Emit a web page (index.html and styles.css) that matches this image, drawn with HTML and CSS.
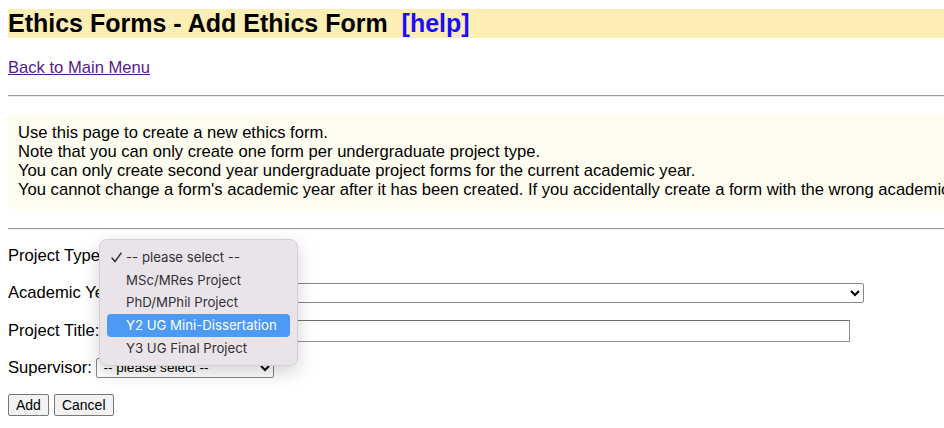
FILE: index.html
```html
<!DOCTYPE html>
<html>
<head>
<meta charset="utf-8">
<title>Ethics Forms - Add Ethics Form</title>
<link rel="stylesheet" href="styles.css">
</head>
<body>
<div class="page">
<h1 class="title">Ethics Forms - Add Ethics Form&nbsp;&nbsp;<a class="help" href="#">[help]</a></h1>
<p class="back"><a href="#">Back to Main Menu</a></p>
<hr class="rule">
<div class="info">
Use this page to create a new ethics form.<br>
Note that you can only create one form per undergraduate project type.<br>
You can only create second year undergraduate project forms for the current academic year.<br>
You cannot change a form's academic year after it has been created. If you accidentally create a form with the wrong academic year, please delete it and create a new one.
</div>
<hr class="rule rule2">
<form class="form">
  <div class="row"><span class="label">Project Type:</span><span class="anchor"><select class="sel sel-type"><option>-- please select --</option></select><span class="menu"><span class="item"><svg class="check" width="11" height="11" viewBox="0 0 11 11"><polyline points="1,6 4,9.6 10,1.2" fill="none" stroke="#333035" stroke-width="1.5" stroke-linecap="round" stroke-linejoin="round"/></svg>-- please select --</span><span class="item">MSc/MRes Project</span><span class="item">PhD/MPhil Project</span><span class="item active">Y2 UG Mini-Dissertation</span><span class="item">Y3 UG Final Project</span></span></span></div>
  <div class="row"><span class="label">Academic Year:</span><select class="sel sel-year"><option></option></select></div>
  <div class="row"><span class="label">Project Title:</span><input class="txt" type="text"></div>
  <div class="row"><span class="label">Supervisor:</span><select class="sel sel-sup"><option>-- please select --</option></select></div>
  <div class="row buttons"><button type="button" class="btn">Add</button><button type="button" class="btn">Cancel</button></div>
</form>
</div>
</body>
</html>
```
FILE: styles.css
```css
html {
  overflow: hidden;
}
body {
  margin: 8px 0 8px 8px;
  font-family: "Liberation Sans", Arial, sans-serif;
  font-size: 16.6px;
  color: #000;
  background: #fff;
}
.page {
  overflow: hidden;
  padding-bottom: 20px;
}
.title {
  margin: 1px 0 0;
  padding: 0;
  background: #fdeeb5;
  font-size: 25px;
  line-height: 29px;
  font-weight: bold;
  white-space: nowrap;
}
.help {
  color: #1a0dff;
  text-decoration: none;
}
.back {
  margin: 21px 0 0;
  line-height: 18px;
}
.back a {
  color: #551a8b;
}
.rule {
  margin: 18px 0 0;
  border: 0;
  border-top: 1px solid #9a9a9a;
  border-bottom: 1px solid #eee;
}
.info {
  margin-top: 17px;
  background: #fffdf0;
  padding: 9px 10px 10px;
  white-space: nowrap;
  line-height: 19px;
}
.rule2 {
  margin-top: 19px;
}
.form {
  margin: 0;
}
.row {
  margin: 14.8px 0 0;
  height: 22.5px;
  display: flex;
  align-items: center;
}
.label {
  margin-right: 2.5px;
}
.anchor {
  position: relative;
  display: block;
}
.sel {
  font-family: "Liberation Sans", Arial, sans-serif;
  font-size: 13.6px;
  height: 20px;
  border: 1px solid #888;
  border-radius: 2px;
  background: #fff;
  margin: 0 0 0 2px;
  padding: 0 2px;
  display: block;
}
.sel-type { width: 178px; }
.sel-year { width: 736px; }
.sel-sup { width: 178px; }
.txt {
  width: 746px;
  border: 1px solid #8f8f8f;
  border-top-color: #6f6f6f;
  padding: 0 2px;
  margin-left: 2px;
  box-sizing: border-box;
  height: 22px;
}
.btn {
  font-family: "Liberation Sans", Arial, sans-serif;
  font-size: 14px;
  height: 22px;
  padding: 0 7px;
  border: 1px solid #777;
  border-radius: 2px;
  background: #f2f2f2;
  color: #000;
  margin: 0;
}
.btn + .btn { margin-left: 5px; }
.menu {
  position: absolute;
  left: -8px;
  top: -7px;
  width: 199px;
  padding: 6px 7px;
  box-sizing: border-box;
  background: #e9e4ea;
  border: 1px solid #d4cfd6;
  border-radius: 8px;
  box-shadow: 0 6px 18px rgba(0,0,0,0.18);
  font-family: Inter, "Noto Sans", sans-serif;
  font-size: 13.2px;
  color: #333035;
  z-index: 5;
  white-space: nowrap;
  display: flex;
  flex-direction: column;
}
.item {
  display: block;
  height: 22.7px;
  line-height: 22.7px;
  padding-left: 19px;
  border-radius: 4px;
  position: relative;
}
.check {
  position: absolute;
  left: 4px;
  top: 6px;
}
.active {
  background: #4d9af5;
  color: #fff;
}
```
